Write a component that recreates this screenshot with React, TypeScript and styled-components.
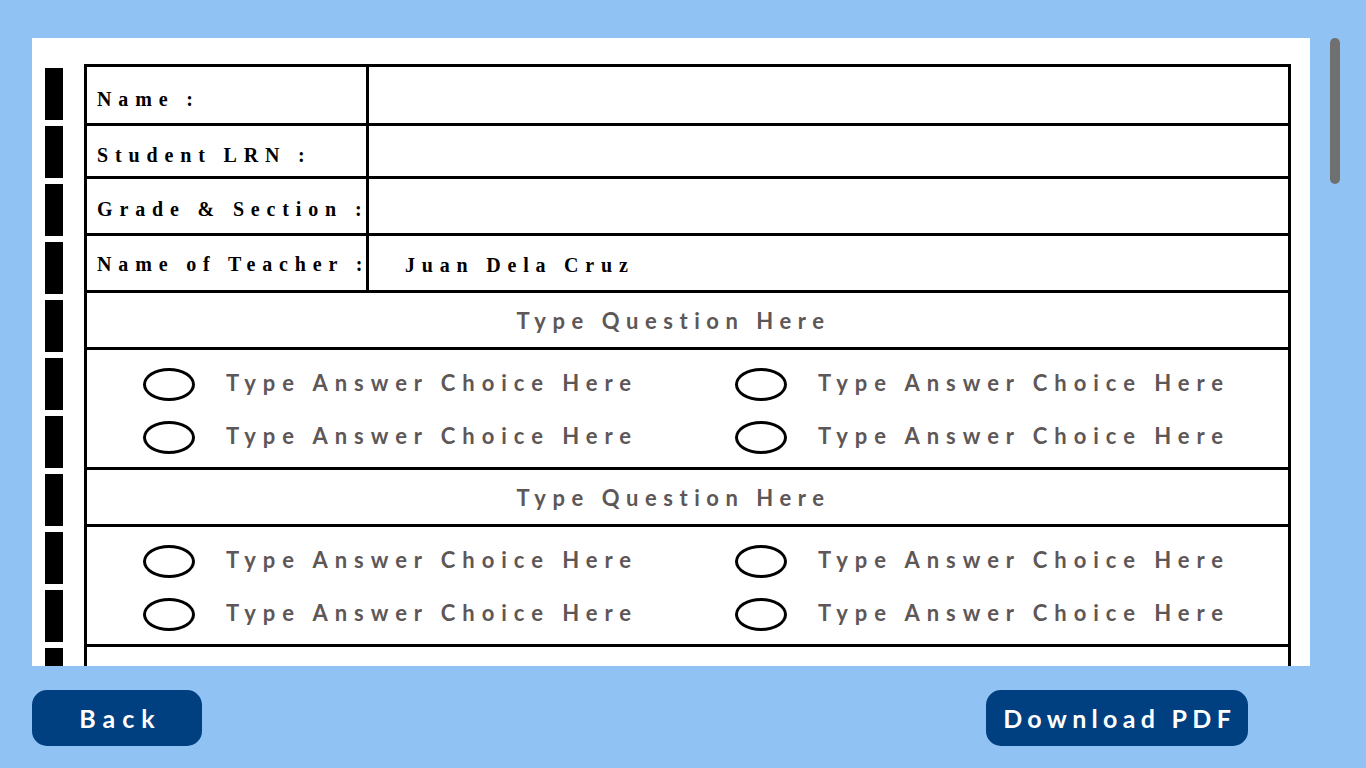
import React from 'react';
import styled, { createGlobalStyle } from 'styled-components';

const GlobalStyle = createGlobalStyle`
  html, body {
    margin: 0;
    padding: 0;
    height: 100%;
    overflow: hidden;
    background: #90c2f3;
  }
  #root { height: 100%; }
  * { box-sizing: border-box; }
`;

const Page = styled.div`
  height: 100vh;
  display: flex;
  flex-direction: column;
  padding: 38px 0 0 32px;
`;

const Viewport = styled.div`
  display: flex;
  gap: 20px;
  height: 628px;
  flex: none;
`;

const Scroller = styled.div`
  width: 1278px;
  height: 100%;
  overflow-y: auto;
  scrollbar-width: none;
  &::-webkit-scrollbar { display: none; }
`;

const ScrollTrack = styled.div`
  width: 10px;
  height: 100%;
  flex: none;
`;

const ScrollThumb = styled.div`
  width: 10px;
  height: 146px;
  border-radius: 5px;
  background: #707070;
`;

const Paper = styled.div`
  width: 1278px;
  background: #ffffff;
  display: flex;
  gap: 21px;
  padding: 26px 19px 20px 13px;
`;

const MarkStrip = styled.div`
  width: 18px;
  flex: none;
  margin-top: 4px;
  background: repeating-linear-gradient(to bottom, #000 0 52px, transparent 52px 58px);
`;

const Sheet = styled.div`
  flex: 1;
  border: 3px solid #000;
  border-bottom: none;
`;

const InfoRow = styled.div<{ $h: number }>`
  display: flex;
  height: ${(p) => p.$h}px;
  border-bottom: 3px solid #000;
`;

const InfoLabel = styled.div<{ $pt: number }>`
  width: 282px;
  flex: none;
  border-right: 3px solid #000;
  display: flex;
  align-items: center;
  padding: ${(p) => p.$pt}px 0 0 10px;
  font-family: "Liberation Serif", "Times New Roman", serif;
  font-weight: 700;
  font-size: 20px;
  letter-spacing: 6.85px;
  color: #000;
  white-space: nowrap;
`;

const InfoValue = styled.div`
  flex: 1;
  display: flex;
  align-items: center;
  padding: 4px 0 0 36px;
  font-family: "Liberation Serif", "Times New Roman", serif;
  font-weight: 700;
  font-size: 20px;
  letter-spacing: 6.8px;
  color: #000;
  white-space: nowrap;
`;

const QuestionRow = styled.div`
  height: 57px;
  border-bottom: 3px solid #000;
  display: flex;
  align-items: center;
  justify-content: center;
  padding: 1px 28px 0 0;
  font-family: "Lato", "Liberation Sans", sans-serif;
  font-weight: 700;
  font-size: 22px;
  letter-spacing: 6.55px;
  color: #5e5757;
  white-space: nowrap;
`;

const AnswerGrid = styled.div`
  height: 120px;
  border-bottom: 3px solid #000;
  display: grid;
  grid-template-columns: 592px 1fr;
  grid-auto-rows: 34px;
  row-gap: 19px;
  padding: 17px 0 0 56px;
`;

const Choice = styled.div`
  display: flex;
  align-items: center;
  gap: 31px;
  font-family: "Lato", "Liberation Sans", sans-serif;
  font-weight: 700;
  font-size: 22px;
  letter-spacing: 6.95px;
  color: #5e5757;
  white-space: nowrap;
  line-height: 1;
`;

const ChoiceText = styled.span`
  padding-bottom: 3px;
`;

const Bubble = styled.span`
  width: 52px;
  height: 33px;
  flex: none;
  border: 3px solid #000;
  border-radius: 50%;
`;

const Footer = styled.div`
  display: flex;
  justify-content: space-between;
  padding: 24px 118px 0 0;
`;

const ActionButton = styled.button<{ $w: number; $ls: number }>`
  width: ${(p) => p.$w}px;
  height: 56px;
  border: none;
  border-radius: 15px;
  background: #003f80;
  color: #ffffff;
  font-family: "Lato", "Liberation Sans", sans-serif;
  font-weight: 700;
  font-size: 25px;
  letter-spacing: ${(p) => p.$ls}px;
  padding: 0 0 0 ${(p) => p.$ls}px;
  white-space: nowrap;
  cursor: pointer;
`;

const info = [
  { label: 'Name :', value: '', h: 59, pt: 8 },
  { label: 'Student LRN :', value: '', h: 53, pt: 9 },
  { label: 'Grade & Section :', value: '', h: 57, pt: 7 },
  { label: 'Name of Teacher :', value: 'Juan Dela Cruz', h: 57, pt: 2 },
];

const questions = Array.from({ length: 14 }, (_, i) => i);

export default function App() {
  return (
    <>
      <GlobalStyle />
      <Page>
        <Viewport>
          <Scroller>
            <Paper>
              <MarkStrip />
              <Sheet>
                {info.map((r) => (
                  <InfoRow key={r.label} $h={r.h}>
                    <InfoLabel $pt={r.pt}>{r.label}</InfoLabel>
                    <InfoValue>{r.value}</InfoValue>
                  </InfoRow>
                ))}
                {questions.map((q) => (
                  <React.Fragment key={q}>
                    <QuestionRow>Type Question Here</QuestionRow>
                    <AnswerGrid>
                      {[0, 1, 2, 3].map((c) => (
                        <Choice key={c}>
                          <Bubble />
                          <ChoiceText>Type Answer Choice Here</ChoiceText>
                        </Choice>
                      ))}
                    </AnswerGrid>
                  </React.Fragment>
                ))}
              </Sheet>
            </Paper>
          </Scroller>
          <ScrollTrack>
            <ScrollThumb />
          </ScrollTrack>
        </Viewport>
        <Footer>
          <ActionButton $w={170} $ls={7}>Back</ActionButton>
          <ActionButton $w={262} $ls={5.3}>Download PDF</ActionButton>
        </Footer>
      </Page>
    </>
  );
}
